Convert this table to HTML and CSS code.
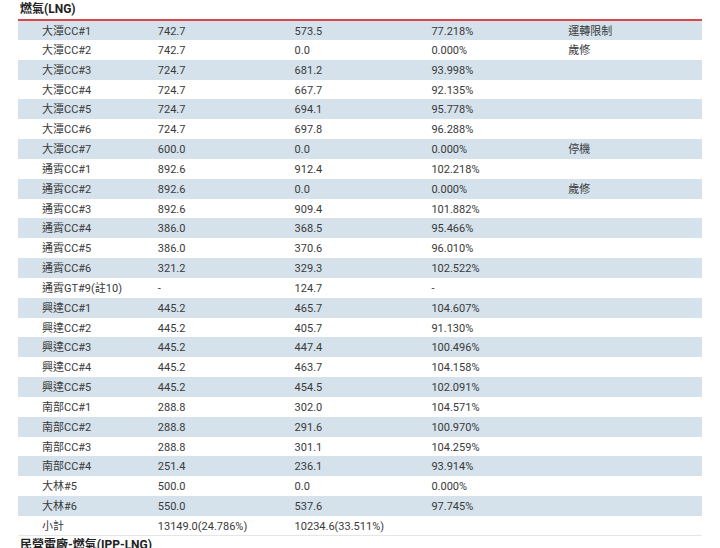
FILE: index.html
```html
<!DOCTYPE html>
<html lang="zh-Hant">
<head>
<meta charset="utf-8">
<link rel="stylesheet" href="styles.css">
</head>
<body>
<div class="page">
  <h3 class="group-title">燃氣(LNG)</h3>
  <table class="units">
    <tbody>
      <tr><td>大潭CC#1</td><td>742.7</td><td>573.5</td><td>77.218%</td><td>運轉限制</td></tr>
      <tr><td>大潭CC#2</td><td>742.7</td><td>0.0</td><td>0.000%</td><td>歲修</td></tr>
      <tr><td>大潭CC#3</td><td>724.7</td><td>681.2</td><td>93.998%</td><td></td></tr>
      <tr><td>大潭CC#4</td><td>724.7</td><td>667.7</td><td>92.135%</td><td></td></tr>
      <tr><td>大潭CC#5</td><td>724.7</td><td>694.1</td><td>95.778%</td><td></td></tr>
      <tr><td>大潭CC#6</td><td>724.7</td><td>697.8</td><td>96.288%</td><td></td></tr>
      <tr><td>大潭CC#7</td><td>600.0</td><td>0.0</td><td>0.000%</td><td>停機</td></tr>
      <tr><td>通霄CC#1</td><td>892.6</td><td>912.4</td><td>102.218%</td><td></td></tr>
      <tr><td>通霄CC#2</td><td>892.6</td><td>0.0</td><td>0.000%</td><td>歲修</td></tr>
      <tr><td>通霄CC#3</td><td>892.6</td><td>909.4</td><td>101.882%</td><td></td></tr>
      <tr><td>通霄CC#4</td><td>386.0</td><td>368.5</td><td>95.466%</td><td></td></tr>
      <tr><td>通霄CC#5</td><td>386.0</td><td>370.6</td><td>96.010%</td><td></td></tr>
      <tr><td>通霄CC#6</td><td>321.2</td><td>329.3</td><td>102.522%</td><td></td></tr>
      <tr><td>通霄GT#9(註10)</td><td>-</td><td>124.7</td><td>-</td><td></td></tr>
      <tr><td>興達CC#1</td><td>445.2</td><td>465.7</td><td>104.607%</td><td></td></tr>
      <tr><td>興達CC#2</td><td>445.2</td><td>405.7</td><td>91.130%</td><td></td></tr>
      <tr><td>興達CC#3</td><td>445.2</td><td>447.4</td><td>100.496%</td><td></td></tr>
      <tr><td>興達CC#4</td><td>445.2</td><td>463.7</td><td>104.158%</td><td></td></tr>
      <tr><td>興達CC#5</td><td>445.2</td><td>454.5</td><td>102.091%</td><td></td></tr>
      <tr><td>南部CC#1</td><td>288.8</td><td>302.0</td><td>104.571%</td><td></td></tr>
      <tr><td>南部CC#2</td><td>288.8</td><td>291.6</td><td>100.970%</td><td></td></tr>
      <tr><td>南部CC#3</td><td>288.8</td><td>301.1</td><td>104.259%</td><td></td></tr>
      <tr><td>南部CC#4</td><td>251.4</td><td>236.1</td><td>93.914%</td><td></td></tr>
      <tr><td>大林#5</td><td>500.0</td><td>0.0</td><td>0.000%</td><td></td></tr>
      <tr><td>大林#6</td><td>550.0</td><td>537.6</td><td>97.745%</td><td></td></tr>
      <tr class="subtotal"><td>小計</td><td>13149.0(24.786%)</td><td>10234.6(33.511%)</td><td></td><td></td></tr>
    </tbody>
  </table>
  <h3 class="group-title next">民營電廠-燃氣(IPP-LNG)</h3>
</div>
</body>
</html>
```

FILE: styles.css
```css
html, body {
  margin: 0;
  padding: 0;
  background: #ffffff;
}

body {
  font-family: Roboto, "Noto Sans CJK TC", "Noto Sans", sans-serif;
  color: #333333;
  font-size: 11px;
}

.page {
  padding: 0 18px;
}

.group-title {
  margin: 0;
  padding: 2px 0 0 2px;
  height: 17px;
  font-size: 12px;
  line-height: 15px;
  font-weight: 700;
  color: #222222;
}

.group-title.next {
  padding-top: 2px;
}

.units {
  width: 684px;
  border-collapse: collapse;
  table-layout: fixed;
  border-top: 2px solid #d9454a;
}

.units tr {
  height: 19.84px;
}

.units td {
  padding: 3px 0 0 3px;
  line-height: 16px;
  white-space: nowrap;
  vertical-align: top;
  color: #3a3a3a;
}

.units td:first-child {
  padding-left: 24px;
}

.units tr:nth-child(odd) td {
  background: #d5e2ec;
}

.units tr.subtotal td {
  background: #ffffff;
  border-bottom: 1px solid #e6e6e6;
}
```
